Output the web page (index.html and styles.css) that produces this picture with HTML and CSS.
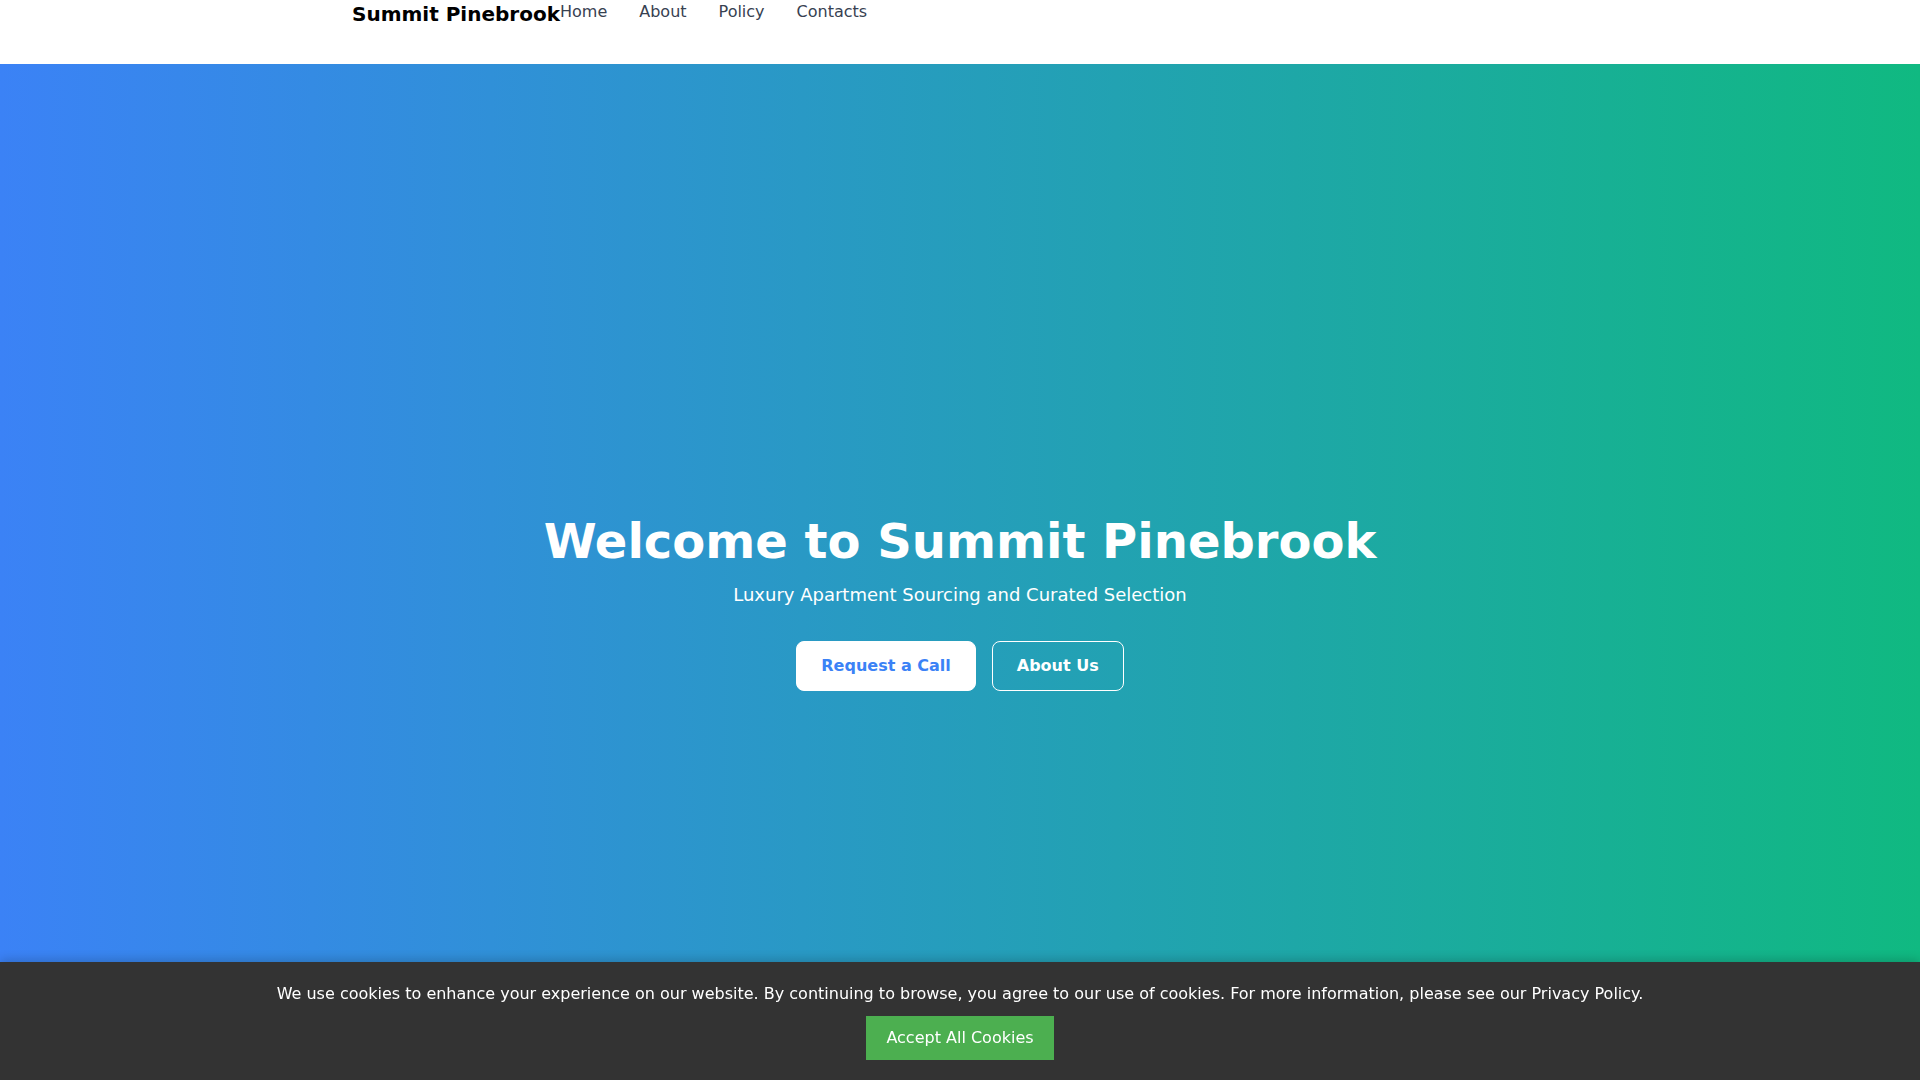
FILE: index.html
```html
<!DOCTYPE html>
<html lang="en">
<head>
    <meta charset="UTF-8">
    <meta name="viewport" content="width=device-width, initial-scale=1.0">
    <title>Summit Pinebrook</title>
    <link rel="stylesheet" href="styles.css">
</head>
<body>
    <!-- Header -->
    <header class="site-header">
        <div class="header-inner">
            <a href="#" class="logo">Summit Pinebrook</a>
            <nav class="main-nav">
                <a href="#">Home</a>
                <a href="#">About</a>
                <a href="#">Policy</a>
                <a href="#">Contacts</a>
            </nav>
        </div>
    </header>

    <!-- Hero -->
    <section class="hero">
        <div class="hero-content">
            <h1>Welcome to Summit Pinebrook</h1>
            <p>Luxury Apartment Sourcing and Curated Selection</p>
            <div class="hero-buttons">
                <a href="#" class="btn btn-light">Request a Call</a>
                <a href="#" class="btn btn-outline">About Us</a>
            </div>
        </div>
    </section>

    <!-- Cookie banner -->
    <div class="cookie-banner" id="cookie-banner">
        <p>We use cookies to enhance your experience on our website. By continuing to browse, you agree to our use of cookies. For more information, please see our Privacy Policy.</p>
        <button id="accept-cookies">Accept All Cookies</button>
    </div>
</body>
</html>
```

FILE: styles.css
```css
* {
    box-sizing: border-box;
}

body {
    font-family: 'DejaVu Sans', 'Liberation Sans', sans-serif;
    margin: 0;
    padding: 0;
    color: #111;
}

a {
    text-decoration: none;
}

.site-header {
    background: white;
    height: 64px;
}

.header-inner {
    max-width: 1280px;
    margin: 0 auto;
    padding: 0 32px;
    display: flex;
    align-items: flex-start;
}

.logo {
    font-size: 20px;
    line-height: 28px;
    font-weight: bold;
    color: #000;
}

.main-nav {
    display: flex;
    gap: 32px;
}

.main-nav a {
    font-size: 16px;
    line-height: 24px;
    color: #374151;
}

.hero {
    min-height: 100vh;
    background: linear-gradient(to right, #3b82f6, #10b981);
    display: flex;
    justify-content: center;
    align-items: center;
    text-align: center;
    color: white;
}

.hero h1 {
    font-size: 48px;
    line-height: 48px;
    margin: 0 0 16px;
}

.hero p {
    font-size: 18px;
    line-height: 28px;
    margin: 0 0 32px;
}

.hero-buttons {
    display: flex;
    justify-content: center;
    gap: 16px;
}

.btn {
    font-size: 16px;
    line-height: 24px;
    font-weight: bold;
    padding: 12px 24px;
    border-radius: 8px;
    border: 1px solid white;
}

.btn-light {
    background: white;
    color: #3b82f6;
}

.btn-outline {
    background: transparent;
    color: white;
}

.cookie-banner {
    position: fixed;
    left: 0;
    right: 0;
    bottom: 0;
    background: #333;
    color: white;
    text-align: center;
    padding: 20px;
    box-shadow: 0 -2px 10px rgba(0, 0, 0, 0.2);
}

.cookie-banner p {
    margin: 0 0 10px;
    font-size: 16px;
    line-height: 24px;
}

.cookie-banner button {
    font-family: inherit;
    background: #4caf50;
    color: white;
    border: none;
    font-size: 16px;
    line-height: 24px;
    padding: 10px 20px;
    cursor: pointer;
}
```
